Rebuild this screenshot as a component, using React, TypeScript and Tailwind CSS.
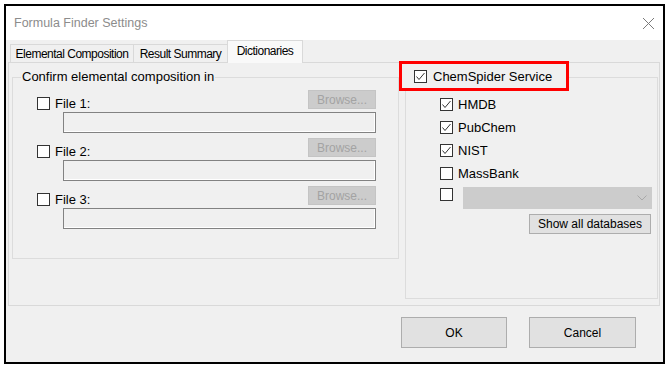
import React from "react";

const FONT = { fontFamily: '"Liberation Sans", Arial, sans-serif' };

function CheckBox({ checked = false }: { checked?: boolean }) {
  return (
    <span className="flex h-[13px] w-[13px] shrink-0 items-center justify-center border border-[#333333] bg-white">
      {checked && (
        <svg width="11" height="11" viewBox="0 0 11 11">
          <polyline
            points="1.5,5.5 4,8.5 9.5,2"
            fill="none"
            stroke="#333333"
            strokeWidth="1"
          />
        </svg>
      )}
    </span>
  );
}

function FileRow({ label }: { label: string }) {
  return (
    <div className="mb-[5px]">
      <div className="flex h-[19px] items-start justify-between">
        <div className="mt-[7px] flex h-[13px] items-center gap-[5px]">
          <CheckBox />
          <span className="text-[13px] leading-[13px] text-black">{label}</span>
        </div>
        <button className="flex h-[19px] w-[68px] items-center justify-center border border-[#c4c4c4] bg-[#cccccc] text-[12px] text-[#a3a3a3]">
          Browse...
        </button>
      </div>
      <div className="mt-[3px] ml-[26px] h-[21px] w-[313px] border border-[#828282] bg-[#f0f0f0] shadow-[inset_-1px_-1px_0_#ffffff]" />
    </div>
  );
}

function DbRow({ label, checked }: { label: string; checked: boolean }) {
  return (
    <div className="flex h-[23px] items-start gap-[5px]">
      <CheckBox checked={checked} />
      <span className="text-[13px] leading-[13px] text-black">{label}</span>
    </div>
  );
}

export default function App() {
  const tabs = [
    { label: "Elemental Composition", width: "w-[123px]", active: false },
    { label: "Result Summary", width: "w-[94px]", active: false },
    { label: "Dictionaries", width: "w-[76px]", active: true },
  ];

  return (
    <div className="h-[368px] w-[669px] bg-white pt-[4px] pl-[4px]" style={FONT}>
      <div className="flex h-[360px] w-[661px] flex-col border-2 border-black bg-[#f0f0f0]">
        {/* title bar */}
        <div className="flex h-[34px] items-center justify-between bg-white pl-[8px] pr-[8px]">
          <span className="text-[12.5px] text-[#8c8c8c]">Formula Finder Settings</span>
          <svg width="13" height="13" viewBox="0 0 13 13">
            <path d="M1 1 L12 12 M12 1 L1 12" stroke="#7a7a7a" strokeWidth="1" fill="none" />
          </svg>
        </div>

        {/* tabs */}
        <div className="relative z-10 flex h-[22px] items-end pl-[4px]">
          {tabs.map(tab => (
            <div
              key={tab.label}
              className={
                tab.active
                  ? `${tab.width} -mb-px flex h-[23px] items-center justify-center border border-b-0 border-[#d9d9d9] bg-[#f9f9f9] pb-[2px] text-[12px] tracking-[-0.5px] text-black`
                  : `${tab.width} flex h-[18px] items-center justify-center border border-b-0 border-r-0 border-[#d9d9d9] bg-[#f0f0f0] text-[12px] tracking-[-0.5px] text-black`
              }
            >
              {tab.label}
            </div>
          ))}
        </div>

        {/* tab page */}
        <div className="ml-[2px] flex h-[244px] w-[652px] items-start gap-[6px] border border-[#d9d9d9] pt-[14px] pl-[3px]">
          {/* left group */}
          <div className="relative h-[182px] w-[387px] border border-[#dcdcdc]">
            <span className="absolute top-[-9px] left-[8px] bg-[#f0f0f0] px-[1px] text-[13px] leading-[16px] text-black">
              Confirm elemental composition in
            </span>
            <div className="pt-[12px] pr-[22px] pl-[24px]">
              <FileRow label="File 1:" />
              <FileRow label="File 2:" />
              <FileRow label="File 3:" />
            </div>
          </div>

          {/* right group */}
          <div className="relative h-[222px] w-[253px] border border-[#dcdcdc]">
            <div className="absolute top-[-17px] left-[-7px] flex h-[30px] w-[170px] items-center gap-[6px] border-[3px] border-[#ff0000] bg-[#f0f0f0] pl-[12px]">
              <CheckBox checked />
              <span className="text-[13px] leading-[13px] text-black">ChemSpider Service</span>
            </div>
            <div className="flex flex-col pt-[20px] pl-[34px]">
              <DbRow label="HMDB" checked />
              <DbRow label="PubChem" checked />
              <DbRow label="NIST" checked />
              <DbRow label="MassBank" checked={false} />
              <div className="-mt-[3px] flex items-start gap-[10px]">
                <div className="mt-[1px]">
                  <CheckBox />
                </div>
                <div className="flex h-[22px] w-[189px] items-center justify-end bg-[#cccccc] pr-[5px]">
                  <svg width="10" height="6" viewBox="0 0 10 6">
                    <polyline points="0.5,0.5 5,5 9.5,0.5" fill="none" stroke="#a8a8a8" strokeWidth="1" />
                  </svg>
                </div>
              </div>
              <button className="mt-[5px] ml-[89px] flex h-[20px] w-[122px] items-center justify-center border border-[#adadad] bg-[#e1e1e1] text-[12px] text-black">
                Show all databases
              </button>
            </div>
          </div>
        </div>

        {/* footer */}
        <div className="flex flex-1 items-start justify-end gap-[22px] pt-[11px] pr-[27px]">
          <button className="flex h-[31px] w-[106px] items-center justify-center border border-[#adadad] bg-[#e1e1e1] text-[12px] text-black">
            OK
          </button>
          <button className="flex h-[31px] w-[107px] items-center justify-center border border-[#adadad] bg-[#e1e1e1] text-[12px] text-black">
            Cancel
          </button>
        </div>
      </div>
    </div>
  );
}
